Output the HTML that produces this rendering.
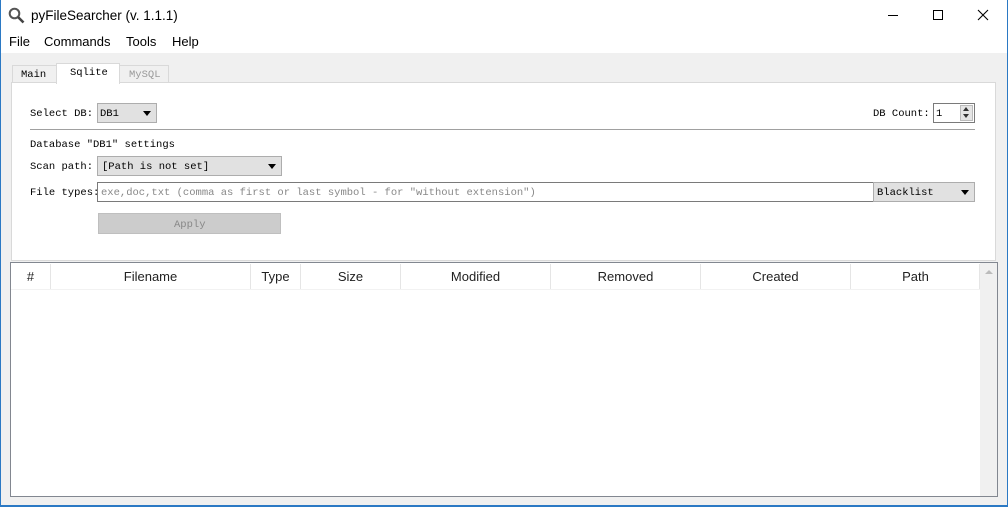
<!DOCTYPE html>
<html><head><meta charset="utf-8"><style>
*{margin:0;padding:0;box-sizing:border-box}
body{width:1008px;height:507px;position:relative;overflow:hidden;background:#f0f0f0;font-family:"Liberation Sans","Noto Sans CJK SC",sans-serif}
.a{position:absolute}
.m{font-family:"Liberation Mono","Noto Sans CJK SC",monospace;font-size:10.5px;color:#000;white-space:nowrap;margin-top:1px}
.ui{font-size:13px;color:#000;white-space:nowrap}
.h{font-size:13px;color:#222;text-align:center;top:269px}
.d{top:264px;width:1px;height:25px;background:#e5e5e5}
.arr{width:0;height:0;border-left:4px solid transparent;border-right:4px solid transparent;border-top:5px solid #000}
</style></head><body>
<div class="a" style="left:0;top:0;width:1008px;height:53px;background:#fff"></div>
<div class="a" style="left:0;top:0;width:1px;height:507px;background:#2b79c4"></div>
<div class="a" style="right:0;top:0;width:1px;height:507px;background:#2b79c4"></div>
<div class="a" style="left:0;top:505px;width:1008px;height:2px;background:#2b79c4"></div>
<svg class="a" style="left:8px;top:7px" width="18" height="17"><circle cx="6.5" cy="6.5" r="4.8" fill="none" stroke="#555" stroke-width="2"/><line x1="10" y1="10" x2="15.5" y2="15.5" stroke="#444" stroke-width="2.6"/></svg>
<div class="a ui" style="left:31px;top:8px;font-size:13.5px">pyFileSearcher (v. 1.1.1)</div>
<div class="a" style="left:888px;top:15px;width:10px;height:1px;background:#000"></div>
<div class="a" style="left:933px;top:10px;width:10px;height:10px;border:1px solid #000"></div>
<svg class="a" style="left:977px;top:9px" width="12" height="12"><path d="M1 1L11 11M11 1L1 11" stroke="#000" stroke-width="1.1"/></svg>
<div class="a ui" style="left:9px;top:34px">File</div>
<div class="a ui" style="left:44px;top:34px">Commands</div>
<div class="a ui" style="left:126px;top:34px">Tools</div>
<div class="a ui" style="left:172px;top:34px">Help</div>
<div class="a" style="left:12px;top:65px;width:45px;height:18px;border:1px solid #d9d9d9;background:#f0f0f0"></div>
<div class="a m" style="left:21px;top:68px">Main</div>
<div class="a" style="left:56px;top:63px;width:64px;height:21px;border:1px solid #d9d9d9;border-bottom:none;background:#fff;z-index:2"></div>
<div class="a m" style="left:70px;top:66px;z-index:3">Sqlite</div>
<div class="a" style="left:119px;top:65px;width:50px;height:18px;border:1px solid #d9d9d9;background:#f0f0f0"></div>
<div class="a m" style="left:129px;top:68px;color:#999">MySQL</div>
<div class="a" style="left:11px;top:82px;width:985px;height:179px;background:#fff;border:1px solid #d9d9d9"></div>
<div class="a m" style="left:30px;top:107px">Select DB:</div>
<div class="a" style="left:97px;top:103px;width:60px;height:20px;background:#e1e1e1;border:1px solid #adadad"></div>
<div class="a m" style="left:100px;top:107px">DB1</div>
<div class="a arr" style="left:143px;top:111px"></div>
<div class="a m" style="left:873px;top:107px">DB Count:</div>
<div class="a" style="left:933px;top:103px;width:42px;height:20px;border:1px solid #7a7a7a;background:#fff"></div>
<div class="a m" style="left:936px;top:107px">1</div>
<div class="a" style="left:960px;top:105px;width:13px;height:16px;background:#e5e5e5;border:1px solid #bbb"></div>
<div class="a" style="left:963px;top:107px;border-left:3px solid transparent;border-right:3px solid transparent;border-bottom:4px solid #333"></div>
<div class="a" style="left:963px;top:114px;border-left:3px solid transparent;border-right:3px solid transparent;border-top:4px solid #333"></div>
<div class="a" style="left:30px;top:129px;width:945px;height:1px;background:#a0a0a0"></div>
<div class="a m" style="left:30px;top:138px">Database "DB1" settings</div>
<div class="a m" style="left:30px;top:160px">Scan path:</div>
<div class="a" style="left:97px;top:156px;width:185px;height:20px;background:#e1e1e1;border:1px solid #adadad"></div>
<div class="a m" style="left:102px;top:160px">[Path is not set]</div>
<div class="a arr" style="left:268px;top:164px"></div>
<div class="a m" style="left:30px;top:186px">File types:</div>
<div class="a" style="left:97px;top:182px;width:777px;height:20px;border:1px solid #7a7a7a;background:#fff"></div>
<div class="a m" style="left:101px;top:186px;color:#888">exe,doc,txt (comma as first or last symbol - for "without extension")</div>
<div class="a" style="left:873px;top:182px;width:102px;height:20px;background:#e1e1e1;border:1px solid #adadad"></div>
<div class="a m" style="left:877px;top:186px">Blacklist</div>
<div class="a arr" style="left:961px;top:190px"></div>
<div class="a" style="left:98px;top:213px;width:183px;height:21px;background:#cccccc;border:1px solid #bfbfbf"></div>
<div class="a m" style="left:174px;top:218px;color:#888">Apply</div>
<div class="a" style="left:10px;top:262px;width:988px;height:235px;background:#fff;border:1px solid #828790"></div>
<div class="a" style="left:980px;top:263px;width:17px;height:233px;background:#f0f0f0"></div>
<div class="a" style="left:985px;top:270px;border-left:4px solid transparent;border-right:4px solid transparent;border-bottom:4px solid #bbb"></div>
<div class="a" style="left:11px;top:289px;width:969px;height:1px;background:#f2f2f2"></div>
<div class="a h" style="left:11px;width:39px">#</div>
<div class="a h" style="left:51px;width:199px">Filename</div>
<div class="a h" style="left:251px;width:49px">Type</div>
<div class="a h" style="left:301px;width:99px">Size</div>
<div class="a h" style="left:401px;width:149px">Modified</div>
<div class="a h" style="left:551px;width:149px">Removed</div>
<div class="a h" style="left:701px;width:149px">Created</div>
<div class="a h" style="left:851px;width:129px">Path</div>
<div class="a d" style="left:50px"></div><div class="a d" style="left:250px"></div><div class="a d" style="left:300px"></div><div class="a d" style="left:400px"></div><div class="a d" style="left:550px"></div><div class="a d" style="left:700px"></div><div class="a d" style="left:850px"></div><div class="a d" style="left:979px"></div>
</body></html>
